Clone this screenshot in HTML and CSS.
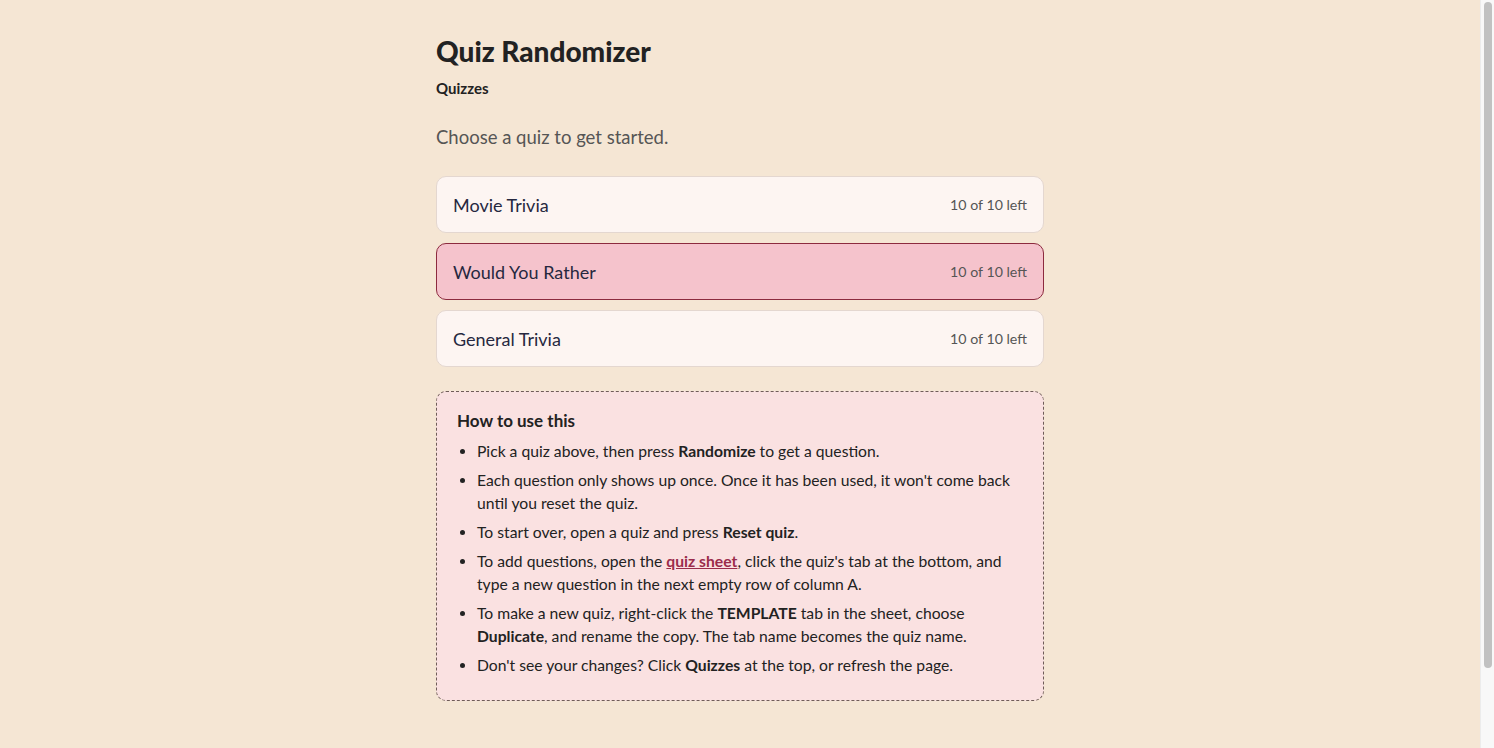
FILE: index.html
```html
<!DOCTYPE html>
<html lang="en">
<head>
<meta charset="utf-8">
<title>Quiz Randomizer</title>
<link rel="stylesheet" href="styles.css">
</head>
<body>
<main class="page">
  <h1 class="title">Quiz Randomizer</h1>
  <nav class="crumbs"><a class="crumb" href="#">Quizzes</a></nav>
  <p class="subtitle">Choose a quiz to get started.</p>
  <div class="quiz-list">
    <button class="quiz-card"><span class="quiz-name">Movie Trivia</span><span class="quiz-count">10 of 10 left</span></button>
    <button class="quiz-card is-active"><span class="quiz-name">Would You Rather</span><span class="quiz-count">10 of 10 left</span></button>
    <button class="quiz-card"><span class="quiz-name">General Trivia</span><span class="quiz-count">10 of 10 left</span></button>
  </div>
  <section class="help">
    <h2 class="help-title">How to use this</h2>
    <ul class="help-list">
      <li>Pick a quiz above, then press <strong>Randomize</strong> to get a question.</li>
      <li>Each question only shows up once. Once it has been used, it won't come back until you reset the quiz.</li>
      <li>To start over, open a quiz and press <strong>Reset quiz</strong>.</li>
      <li>To add questions, open the <a class="help-link" href="#">quiz sheet</a>, click the quiz's tab at the bottom, and type a new question in the next empty row of column A.</li>
      <li>To make a new quiz, right-click the <strong>TEMPLATE</strong> tab in the sheet, choose <strong>Duplicate</strong>, and rename the copy. The tab name becomes the quiz name.</li>
      <li>Don't see your changes? Click <strong>Quizzes</strong> at the top, or refresh the page.</li>
    </ul>
  </section>
</main>
<div class="fake-scrollbar" aria-hidden="true"><div class="fake-thumb"></div></div>
</body>
</html>
```

FILE: styles.css
```css
html, body {
  margin: 0;
  padding: 0;
}
body {
  background: #f5e6d4;
  color: #222;
  font-family: "Lato", "Noto Sans", sans-serif;
  padding-right: 14px;
}
.page {
  width: 608px;
  margin: 0 auto;
  padding: 33px 0 138px;
}
.title {
  margin: 0;
  font-size: 28px;
  line-height: 36px;
  font-weight: 900;
  color: #222;
}
.crumbs {
  margin-top: 9px;
  line-height: 20px;
}
.crumb {
  font-size: 15px;
  font-weight: 700;
  color: #222;
  text-decoration: none;
}
.subtitle {
  margin: 26px 0 0;
  font-size: 18.5px;
  line-height: 26px;
  color: #555;
}
.quiz-list {
  margin-top: 26px;
  display: flex;
  flex-direction: column;
  gap: 10px;
}
.quiz-card {
  display: flex;
  align-items: center;
  justify-content: space-between;
  height: 57px;
  padding: 0 16px;
  background: #fdf5f2;
  border: 1px solid #e4d7d0;
  border-radius: 10px;
  font-family: inherit;
  text-align: left;
  cursor: pointer;
}
.quiz-card.is-active {
  background: #f5c3cc;
  border-color: #8c2a3e;
}
.quiz-name {
  font-size: 18px;
  color: #26283f;
}
.quiz-count {
  font-size: 14.2px;
  color: #555;
}
.help {
  margin-top: 24px;
  padding: 17px 20px 23px;
  background: #fae1e1;
  border: 1px dashed #6f5d58;
  border-radius: 10px;
}
.help-title {
  margin: 0 0 7px;
  font-size: 17px;
  line-height: 24px;
  font-weight: 700;
  color: #222;
}
.help-list {
  margin: 0;
  padding-left: 20px;
  display: flex;
  flex-direction: column;
  gap: 6px;
}
.help-list li {
  font-size: 15.7px;
  line-height: 23px;
  color: #222;
}
.help-list strong {
  font-weight: 700;
}
.help-link {
  color: #9b2c4b;
  font-weight: 700;
}
.fake-scrollbar {
  position: fixed;
  top: 0;
  right: 0;
  width: 14px;
  height: 100%;
  background: #f8f8f8;
  border-left: 1px solid #ececec;
  box-sizing: border-box;
}
.fake-thumb {
  margin: 2px 2px 0 3px;
  height: 666px;
  border-radius: 5px;
  background: #c1c1c1;
}
```
